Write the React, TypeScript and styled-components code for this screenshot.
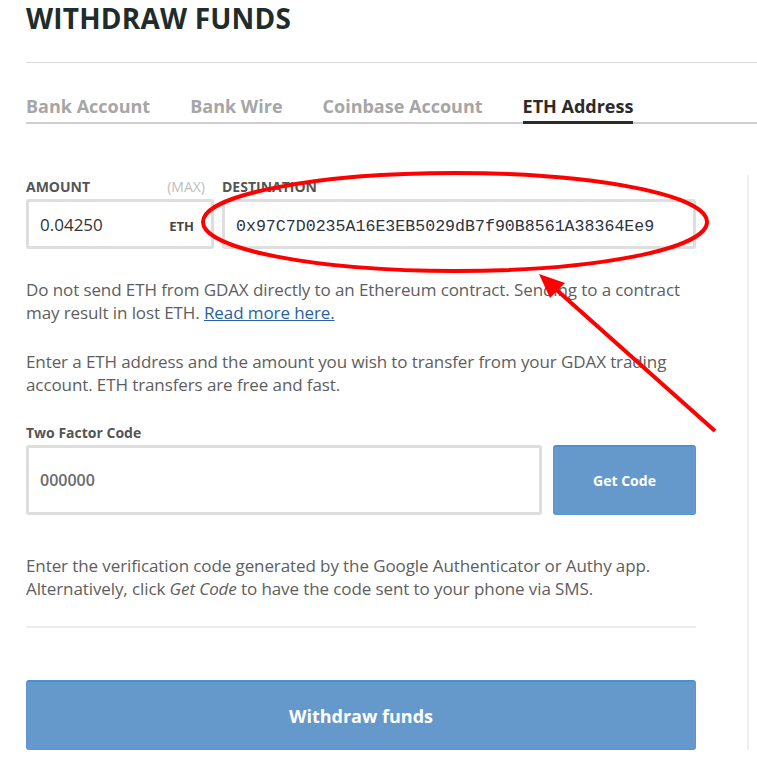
import React from "react";
import styled, { createGlobalStyle } from "styled-components";

const GlobalStyle = createGlobalStyle`
  html, body { margin: 0; padding: 0; background: #fff; }
  body { font-family: "Open Sans", "Liberation Sans", sans-serif; overflow: hidden; }
  * { box-sizing: border-box; }
`;

const Page = styled.div`
  position: relative;
  width: 757px;
  height: 767px;
  overflow: hidden;
  padding-left: 26px;
`;

const Title = styled.h1`
  margin: 0;
  padding-top: 2px;
  font-size: 28px;
  line-height: 32px;
  font-weight: 700;
  color: #1f2c2c;
  letter-spacing: 0.2px;
`;

const TopRule = styled.div`
  margin-top: 28px;
  height: 1px;
  background: #dcdcdc;
`;

const Tabs = styled.div`
  display: flex;
  gap: 40px;
  margin-top: 31px;
  border-bottom: 2px solid #cfcfcf;
`;

const Tab = styled.div<{ $active?: boolean }>`
  font-size: 18px;
  font-weight: 700;
  line-height: 24px;
  padding-bottom: 3px;
  margin-bottom: -2px;
  color: ${(p) => (p.$active ? "#2b2b2b" : "#a6a6a6")};
  border-bottom: 3px solid ${(p) => (p.$active ? "#2b2b2b" : "transparent")};
`;

const Body = styled.div`
  display: flex;
  margin-top: 51px;
`;

const Main = styled.div`
  width: 670px;
  padding-top: 3px;
`;

const SideLine = styled.div`
  margin-left: 51px;
  width: 2px;
  height: 575px;
  background: #efefef;
`;

const FieldRow = styled.div`
  display: flex;
  gap: 8px;
`;

const Field = styled.div<{ $width?: number }>`
  display: flex;
  flex-direction: column;
  ${(p) => (p.$width ? `width: ${p.$width}px;` : "flex: 1;")}
`;

const LabelRow = styled.div`
  display: flex;
  justify-content: space-between;
  height: 21px;
`;

const Label = styled.span`
  font-size: 14px;
  font-weight: 700;
  color: #555;
  line-height: 18px;
`;

const MaxLabel = styled.span`
  font-size: 14px;
  font-weight: 400;
  color: #bdbdbd;
  line-height: 18px;
  padding-right: 9px;
`;

const InputBox = styled.div<{ $height: number }>`
  display: flex;
  align-items: center;
  height: ${(p) => p.$height}px;
  border: 3px solid #dedede;
  border-radius: 3px;
  padding: 0 11px;
  background: #fff;
`;

const AmountValue = styled.span`
  flex: 1;
  font-size: 17px;
  color: #333;
`;

const Unit = styled.span`
  font-size: 13px;
  font-weight: 700;
  color: #444;
  padding-top: 3px;
  padding-right: 6px;
`;

const Address = styled.span`
  font-family: "Liberation Mono", "DejaVu Sans Mono", monospace;
  font-size: 16.6px;
  color: #2d3440;
  padding-top: 4px;
`;

const Note = styled.p<{ $top: number }>`
  margin: ${(p) => p.$top}px 0 0;
  font-size: 17px;
  line-height: 23px;
  color: #5e5e5e;
  letter-spacing: -0.1px;
  white-space: nowrap;
`;

const Link = styled.a`
  color: #2a62a0;
  text-decoration: underline;
`;

const SmallLabel = styled.div`
  margin-top: 27px;
  font-size: 14px;
  font-weight: 700;
  color: #555;
  line-height: 19px;
`;

const CodeRow = styled.div`
  display: flex;
  gap: 11px;
  margin-top: 3px;
`;

const CodeInput = styled(InputBox)`
  flex: 1;
  font-size: 16px;
  font-weight: 600;
  color: #6a6a6a;
`;

const BlueButton = styled.button<{ $width?: number; $height: number; $size: number }>`
  ${(p) => (p.$width ? `width: ${p.$width}px;` : "width: 100%;")}
  height: ${(p) => p.$height}px;
  background: #6699cb;
  border: 1px solid #5b95d2;
  border-top: 2px solid #4c8fd6;
  border-radius: 3px;
  color: #fff;
  font-family: "Open Sans", "Liberation Sans", sans-serif;
  font-size: ${(p) => p.$size}px;
  font-weight: 700;
  padding: 0;
  cursor: pointer;
`;

const Divider = styled.div`
  margin-top: 26px;
  height: 2px;
  background: #ededed;
`;

const ButtonArea = styled.div`
  padding-top: 52px;
`;

const Overlay = styled.svg`
  position: absolute;
  left: 0;
  top: 0;
  pointer-events: none;
`;

export default function App() {
  return (
    <>
      <GlobalStyle />
      <Page>
        <Title>WITHDRAW FUNDS</Title>
        <TopRule />
        <Tabs>
          <Tab>Bank Account</Tab>
          <Tab>Bank Wire</Tab>
          <Tab>Coinbase Account</Tab>
          <Tab $active>ETH Address</Tab>
        </Tabs>
        <Body>
          <Main>
            <FieldRow>
              <Field $width={188}>
                <LabelRow>
                  <Label>AMOUNT</Label>
                  <MaxLabel>(MAX)</MaxLabel>
                </LabelRow>
                <InputBox $height={50}>
                  <AmountValue>0.04250</AmountValue>
                  <Unit>ETH</Unit>
                </InputBox>
              </Field>
              <Field>
                <LabelRow>
                  <Label>DESTINATION</Label>
                </LabelRow>
                <InputBox $height={50}>
                  <Address>0x97C7D0235A16E3EB5029dB7f90B8561A38364Ee9</Address>
                </InputBox>
              </Field>
            </FieldRow>
            <Note $top={29}>
              Do not send ETH from GDAX directly to an Ethereum contract. Sending to a contract
              <br />
              may result in lost ETH. <Link href="#">Read more here.</Link>
            </Note>
            <Note $top={26}>
              Enter a ETH address and the amount you wish to transfer from your GDAX trading
              <br />
              account. ETH transfers are free and fast.
            </Note>
            <SmallLabel>Two Factor Code</SmallLabel>
            <CodeRow>
              <CodeInput $height={70}>000000</CodeInput>
              <BlueButton $width={143} $height={70} $size={14}>
                Get Code
              </BlueButton>
            </CodeRow>
            <Note $top={39}>
              Enter the verification code generated by the Google Authenticator or Authy app.
              <br />
              Alternatively, click <em>Get Code</em> to have the code sent to your phone via SMS.
            </Note>
            <Divider />
            <ButtonArea>
              <BlueButton $height={70} $size={18}>
                Withdraw funds
              </BlueButton>
            </ButtonArea>
          </Main>
          <SideLine />
        </Body>
        <Overlay width="757" height="767" viewBox="0 0 757 767">
          <ellipse cx="455" cy="222" rx="252" ry="49" fill="none" stroke="#ff0000" strokeWidth="4" />
          <line x1="715" y1="431" x2="550" y2="284" stroke="#ff0000" strokeWidth="4" />
          <polygon points="539,274 565,283 550,298" fill="#ff0000" />
        </Overlay>
      </Page>
    </>
  );
}
